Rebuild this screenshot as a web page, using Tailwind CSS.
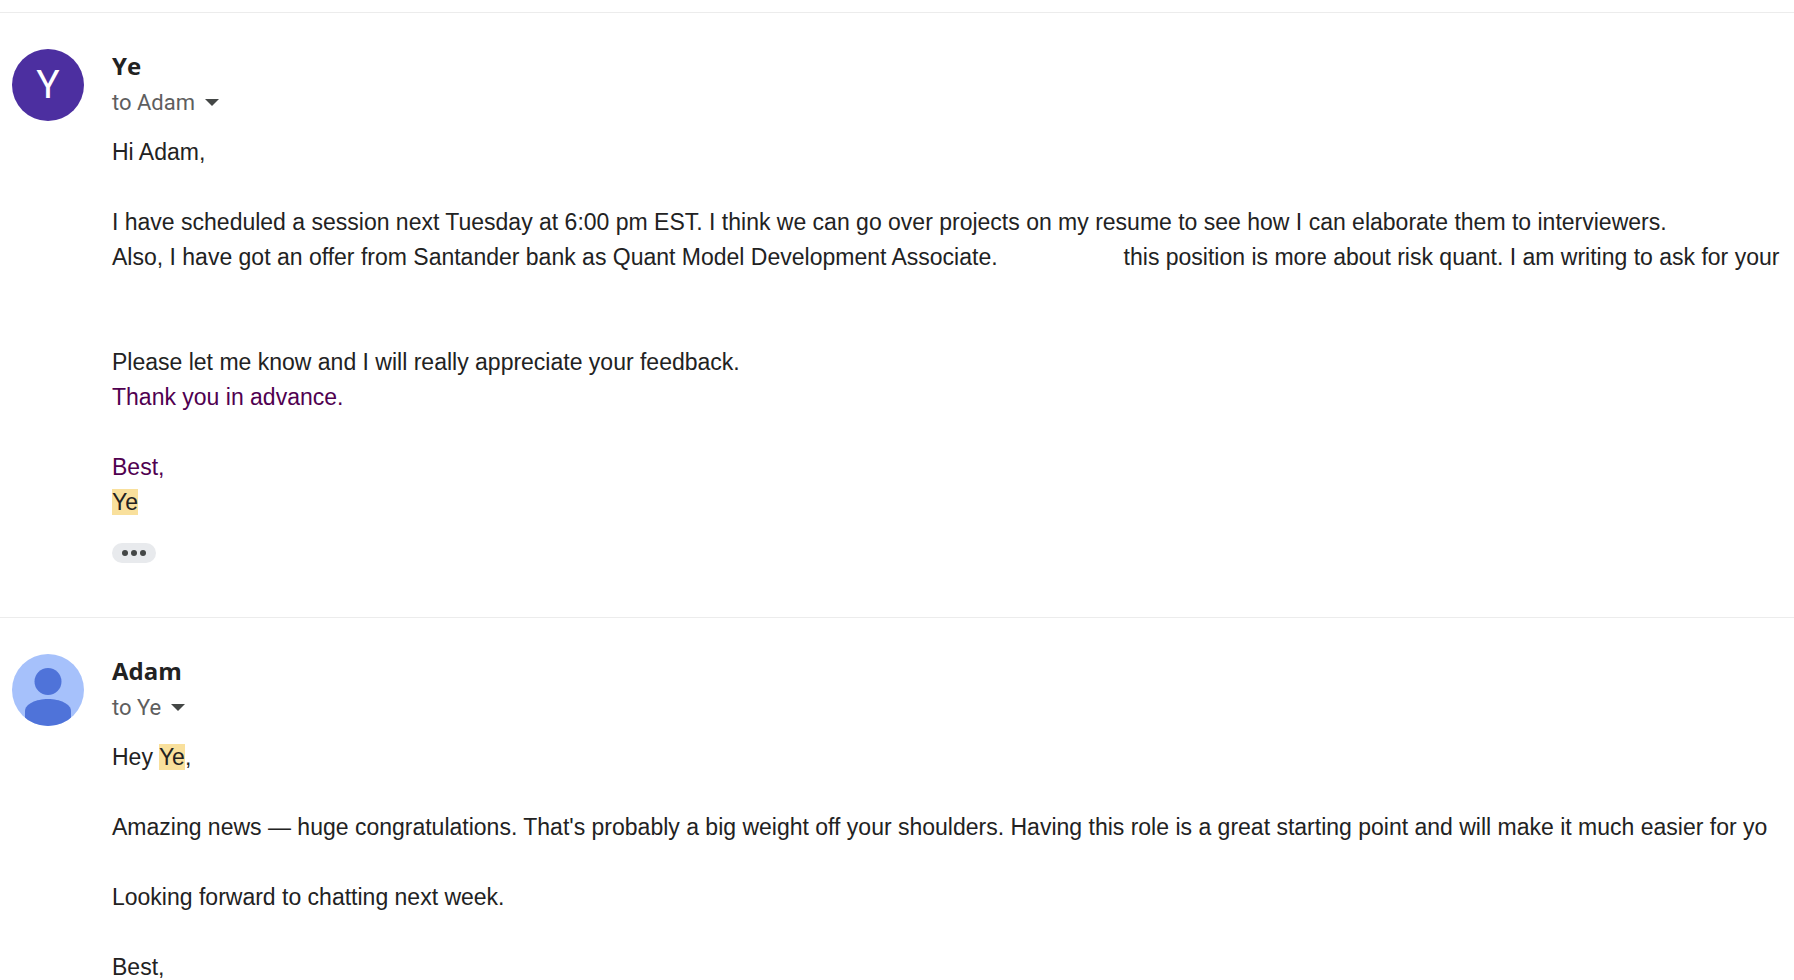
<!DOCTYPE html>
<html lang="en">

<head>
    <meta charset="UTF-8">
    <meta name="viewport" content="width=device-width, initial-scale=1.0">
    <title>Mail thread</title>
    <script src="https://cdn.jsdelivr.net/npm/@tailwindcss/browser@4"></script>
</head>

<body class="bg-white text-[#222222] font-['Liberation_Sans',Arial,sans-serif] overflow-hidden">

    <main class="pt-3">

        <!-- Message from Ye -->
        <article class="flex gap-7 border-t border-[#ececec] px-3 pt-9 pb-[54px]">
            <div class="flex size-[72px] shrink-0 items-center justify-center rounded-full bg-[#4c2fa0] font-[Roboto,sans-serif] text-[39px] leading-none text-white">Y</div>
            <div class="min-w-0 flex-1">
                <h2 class="font-['Open_Sans',sans-serif] text-2xl leading-[34px] font-bold">Ye</h2>
                <button type="button" class="flex h-[38px] items-center gap-[10px] font-[Roboto,sans-serif] text-[22px] text-[#5e5e5e]">
                    to Adam
                    <svg class="h-[7px] w-[14px]" viewBox="0 0 14 7" fill="#444746" aria-hidden="true"><path d="M0 0h14L7 7z"/></svg>
                </button>

                <div class="mt-[14px] text-[23px] leading-[35px] whitespace-nowrap">
                    <p>Hi Adam,</p>
                    <br>
                    <p>I have scheduled a session next Tuesday at 6:00 pm EST. I think we can go over projects on my resume to see how I can elaborate them to interviewers.</p>
                    <p>Also, I have got an offer from Santander bank as Quant Model Development Associate.<span class="inline-block w-[126px]"></span>this position is more about risk quant. I am writing to ask for your</p>
                    <br>
                    <br>
                    <p>Please let me know and I will really appreciate your feedback.</p>
                    <div class="text-[#500050]">
                        <p>Thank you in advance.</p>
                        <br>
                        <p>Best,</p>
                        <p><mark class="bg-[#f9e09c] text-[#222222]">Ye</mark></p>
                    </div>
                </div>

                <button type="button" aria-label="Show trimmed content" class="mt-[23px] flex h-5 w-11 items-center justify-center gap-[3px] rounded-full bg-[#e8eaed]">
                    <span class="size-[6px] rounded-full bg-[#444746]"></span>
                    <span class="size-[6px] rounded-full bg-[#444746]"></span>
                    <span class="size-[6px] rounded-full bg-[#444746]"></span>
                </button>
            </div>
        </article>

        <!-- Reply from Adam -->
        <article class="flex gap-7 border-t border-[#ececec] px-3 pt-9">
            <svg class="size-[72px] shrink-0 rounded-full" viewBox="0 0 72 72" aria-hidden="true">
                <rect width="72" height="72" fill="#a6c1fb"/>
                <circle cx="36" cy="27.500" r="13.500" fill="#4f73d9"/>
                <path d="M13 72V57c0-7 11-12 23-12s23 5 23 12v15z" fill="#4f73d9"/>
            </svg>
            <div class="min-w-0 flex-1">
                <h2 class="font-['Open_Sans',sans-serif] text-2xl leading-[34px] font-bold">Adam</h2>
                <button type="button" class="flex h-[38px] items-center gap-[10px] font-[Roboto,sans-serif] text-[22px] text-[#5e5e5e]">
                    to Ye
                    <svg class="h-[7px] w-[14px]" viewBox="0 0 14 7" fill="#444746" aria-hidden="true"><path d="M0 0h14L7 7z"/></svg>
                </button>

                <div class="mt-[14px] text-[23px] leading-[35px] whitespace-nowrap">
                    <p>Hey <mark class="bg-[#f9e09c] text-[#222222]">Ye</mark>,</p>
                    <br>
                    <p>Amazing news — huge congratulations. That's probably a big weight off your shoulders. Having this role is a great starting point and will make it much easier for yo</p>
                    <br>
                    <p>Looking forward to chatting next week.</p>
                    <br>
                    <p>Best,</p>
                </div>
            </div>
        </article>

    </main>

</body>

</html>
